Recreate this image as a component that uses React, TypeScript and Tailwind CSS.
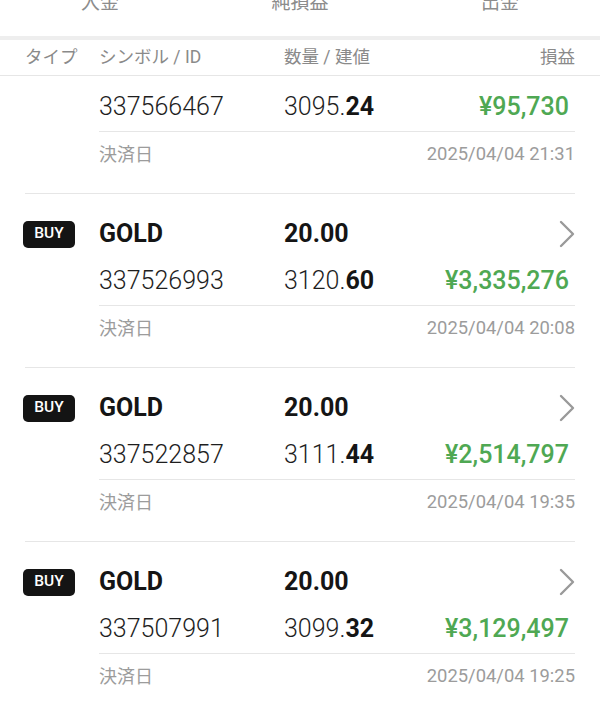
import React, { FC } from "react";

type Trade = {
  id: string;
  price: string;
  decimals: string;
  pnl: string;
  closedAt: string;
  head?: boolean;
};

const trades: Trade[] = [
  { id: "337566467", price: "3095.", decimals: "24", pnl: "¥95,730", closedAt: "2025/04/04 21:31" },
  { id: "337526993", price: "3120.", decimals: "60", pnl: "¥3,335,276", closedAt: "2025/04/04 20:08", head: true },
  { id: "337522857", price: "3111.", decimals: "44", pnl: "¥2,514,797", closedAt: "2025/04/04 19:35", head: true },
  { id: "337507991", price: "3099.", decimals: "32", pnl: "¥3,129,497", closedAt: "2025/04/04 19:25", head: true },
];

const font = "font-['Roboto','Noto_Sans_CJK_JP',sans-serif]";

const Chevron = () => (
  <svg width="16" height="28" viewBox="0 0 16 28" fill="none" className="text-[#9a9a9a]">
    <polyline points="2,2 14,14 2,26" stroke="currentColor" strokeWidth="2.4" strokeLinecap="round" strokeLinejoin="round" />
  </svg>
);

const TradeRow: FC<{ trade: Trade }> = ({ trade }) => (
  <div className={`flex border-b border-[#e6e6e6] ${trade.head ? "pt-[22px]" : ""}`}>
    <div className="w-[74px] shrink-0">
      {trade.head && (
        <div className="flex h-[36px] items-center">
          <span className="-ml-[2px] flex h-[27px] w-[52px] items-center justify-center rounded-[5px] bg-[#141414] text-[15.5px] font-medium text-white">
            BUY
          </span>
        </div>
      )}
    </div>
    <div className="flex-1">
      {trade.head && (
        <div className="flex h-[36px] items-center text-[25px] font-bold text-[#151515]">
          <span className="w-[185px]">GOLD</span>
          <span className="flex-1">20.00</span>
          <Chevron />
        </div>
      )}
      <div className={`box-content flex h-[36px] items-center border-b border-[#e6e6e6] pb-[6px] ${trade.head ? "pt-[11px]" : "pt-[13px]"}`}>
        <span className="w-[185px] text-[25px] font-light text-[#1e1e1e]">{trade.id}</span>
        <span className="flex-1 text-[25px] font-light text-[#1e1e1e]">
          {trade.price}
          <span className="font-bold text-[#151515]">{trade.decimals}</span>
        </span>
        <span className="pr-[6px] text-[25px] font-medium text-[#4fa853]">{trade.pnl}</span>
      </div>
      <div className="mb-[17px] flex h-[44px] items-center justify-between text-[18px] text-[#9c9c9c]">
        <span>決済日</span>
        <span className="text-[18.4px]">{trade.closedAt}</span>
      </div>
    </div>
  </div>
);

export default function App() {
  return (
    <div className={`h-[710px] w-[600px] overflow-hidden bg-white ${font}`}>
      <div className="h-[36px] overflow-hidden">
        <div className="-mt-[7px] grid grid-cols-3 text-center text-[19px] leading-[19px] text-[#8c8c8c]">
          <span>入金</span>
          <span>純損益</span>
          <span>出金</span>
        </div>
      </div>
      <div className="h-[4px] bg-[#eeeeee]" />
      <div className="flex h-[36px] items-center border-b border-[#e6e6e6] px-[25px] text-[17.5px] text-[#8a8a8a]">
        <span className="w-[74px]">タイプ</span>
        <span className="w-[185px]">シンボル / ID</span>
        <span className="flex-1">数量 / 建値</span>
        <span>損益</span>
      </div>
      <div className="px-[25px]">
        {trades.map((t) => (
          <TradeRow key={t.id} trade={t} />
        ))}
      </div>
    </div>
  );
}
